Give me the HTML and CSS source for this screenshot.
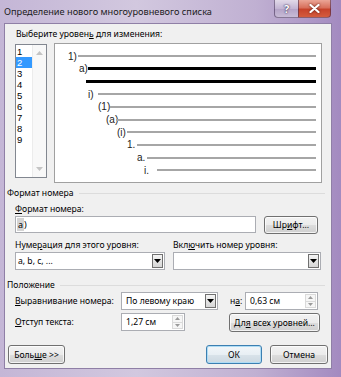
FILE: index.html
```html
<!DOCTYPE html>
<html lang="ru">
<head>
<meta charset="utf-8">
<title>Определение нового многоуровневого списка</title>
<link rel="stylesheet" href="styles.css">
</head>
<body>
<div class="window">
  <div class="titlebar">
    <div class="title">Определение нового многоуровневого списка</div>
    <div class="caption-btns">
      <div class="cap-btn help">?</div>
      <div class="cap-btn close">
        <svg width="11" height="9" viewBox="0 0 11 9"><path d="M1.5 1 L9.5 8 M9.5 1 L1.5 8" stroke="#fff" stroke-width="2.2" stroke-linecap="round" fill="none"/></svg>
      </div>
    </div>
  </div>
  <div class="frame">
    <div class="client">
      <div class="sec-levels">
        <div class="lbl first">Выберите уровен<u>ь</u> для изменения:</div>
        <div class="level-row">
          <div class="listbox">
            <div class="items">
              <div class="item">1</div>
              <div class="item sel">2</div>
              <div class="item">3</div>
              <div class="item">4</div>
              <div class="item">5</div>
              <div class="item">6</div>
              <div class="item">7</div>
              <div class="item">8</div>
              <div class="item">9</div>
            </div>
            <div class="vscroll">
              <svg width="7" height="4" viewBox="0 0 7 4"><path d="M0 4 L3.5 0 L7 4 Z" fill="#c4c4c4"/></svg>
              <svg width="7" height="4" viewBox="0 0 7 4"><path d="M0 0 L3.5 4 L7 0 Z" fill="#c4c4c4"/></svg>
            </div>
          </div>
          <div class="preview">
            <div class="prow lv1"><span class="num">1)</span><span class="line"></span></div>
            <div class="prow lv2 dark"><span class="num">a)</span><span class="line"></span></div>
            <div class="prow lv3 dark"><span class="num"></span><span class="line"></span></div>
            <div class="prow lv4"><span class="num">i)</span><span class="line"></span></div>
            <div class="prow lv5"><span class="num">(1)</span><span class="line"></span></div>
            <div class="prow lv6"><span class="num">(a)</span><span class="line"></span></div>
            <div class="prow lv7"><span class="num">(i)</span><span class="line"></span></div>
            <div class="prow lv8"><span class="num">1.</span><span class="line"></span></div>
            <div class="prow lv9"><span class="num">a.</span><span class="line"></span></div>
            <div class="prow lv10"><span class="num">i.</span><span class="line"></span></div>
          </div>
        </div>
      </div>

      <div class="group g1">Формат номера</div>
      <div class="lbl field"><u>Ф</u>ормат номера:</div>
      <div class="row-input">
        <div class="textbox"><span class="shade">a</span>)</div>
        <div class="btn font-btn">Шр<u>и</u>фт...</div>
      </div>
      <div class="cols">
        <div class="col c1">
          <div class="lbl">Нуме<u>р</u>ация для этого уровня:</div>
          <div class="combo">
            <div class="val">a, b, c, ...</div>
            <div class="dd"><svg width="7" height="4" viewBox="0 0 7 4"><path d="M0 0 L3.5 4 L7 0 Z" fill="#000"/></svg></div>
          </div>
        </div>
        <div class="col c2">
          <div class="lbl">Вкл<u>ю</u>чить номер уровня:</div>
          <div class="combo">
            <div class="val"></div>
            <div class="dd"><svg width="7" height="4" viewBox="0 0 7 4"><path d="M0 0 L3.5 4 L7 0 Z" fill="#000"/></svg></div>
          </div>
        </div>
      </div>

      <div class="group g2">Положение</div>
      <div class="prow-pos r1">
        <div class="plbl"><u>В</u>ыравнивание номера:</div>
        <div class="combo align">
          <div class="val">По левому краю</div>
          <div class="dd"><svg width="7" height="4" viewBox="0 0 7 4"><path d="M0 0 L3.5 4 L7 0 Z" fill="#000"/></svg></div>
        </div>
        <div class="na">н<u>а</u>:</div>
        <div class="spin s63">
          <div class="val">0,63 см</div>
          <div class="arrows">
            <div class="arr"><svg width="5" height="3" viewBox="0 0 5 3"><path d="M0 3 L2.5 0 L5 3 Z" fill="#9a9a9a"/></svg></div>
            <div class="arr"><svg width="5" height="3" viewBox="0 0 5 3"><path d="M0 0 L2.5 3 L5 0 Z" fill="#9a9a9a"/></svg></div>
          </div>
        </div>
      </div>
      <div class="prow-pos r2">
        <div class="plbl"><u>О</u>тступ текста:</div>
        <div class="spin s127">
          <div class="val">1,27 см</div>
          <div class="arrows">
            <div class="arr"><svg width="5" height="3" viewBox="0 0 5 3"><path d="M0 3 L2.5 0 L5 3 Z" fill="#9a9a9a"/></svg></div>
            <div class="arr"><svg width="5" height="3" viewBox="0 0 5 3"><path d="M0 0 L2.5 3 L5 0 Z" fill="#9a9a9a"/></svg></div>
          </div>
        </div>
        <div class="btn all-btn">Дл<u>я</u>&nbsp;всех уровней...</div>
      </div>

      <div class="buttons">
        <div class="btn more">Боль<u>ш</u>е &gt;&gt;</div>
        <div class="btn ok">ОК</div>
        <div class="btn cancel">Отмена</div>
      </div>
    </div>
  </div>
</div>
</body>
</html>
```
FILE: styles.css
```css
* { box-sizing: border-box; }
html, body { margin: 0; padding: 0; }
body {
  font-family: "Noto Sans", "Open Sans", sans-serif;
  font-size: 8.6px;
  color: #000;
  background: #fff;
}
u { text-decoration: underline; text-underline-offset: 1px; }

.window {
  width: 341px;
  height: 377px;
  display: flex;
  flex-direction: column;
  background: linear-gradient(90deg, #c4b6d6 0%, #d2c8df 40%, #c0b0d2 75%, #a38ac0 100%);
  overflow: hidden;
}

.titlebar {
  height: 23px;
  display: flex;
  align-items: flex-start;
}
.title {
  padding-left: 4px;
  line-height: 24px;
  font-size: 9.2px;
  color: #1c1c1c;
  white-space: nowrap;
}
.caption-btns {
  margin-left: auto;
  margin-right: 10px;
  display: flex;
  height: 18px;
}
.cap-btn {
  height: 18px;
  display: flex;
  align-items: center;
  justify-content: center;
  border: 1px solid rgba(60, 40, 80, 0.55);
  border-top: none;
}
.cap-btn.help {
  width: 24px;
  border-radius: 0 0 0 4px;
  background: linear-gradient(#e2dae9, #c3b5d3 50%, #b3a2c6 51%, #c8bbd6);
  color: #fff;
  font-weight: bold;
  font-size: 11px;
  text-shadow: 0 0 2px #3a2a50, 0 0 1px #3a2a50;
  border-right: none;
}
.cap-btn.close {
  width: 33px;
  border-radius: 0 0 4px 0;
  background: linear-gradient(#eba596, #d8705c 45%, #c7432b 55%, #d45c3e);
}
.cap-btn.close svg { filter: drop-shadow(0 0 1px #5a1a10); }

.frame {
  flex: 1;
  display: flex;
  padding: 0 9px 8px 4px;
}
.client {
  flex: 1;
  background: #f0f0f0;
  border: 1px solid #8f7fa6;
  display: flex;
  flex-direction: column;
}

.lbl { line-height: 14px; white-space: nowrap; }

.sec-levels { padding: 3px 0 0 10px; }
.sec-levels .lbl.first { padding-left: 1px; }
.level-row { display: flex; margin-top: 2px; align-items: flex-start; }

.listbox {
  width: 32px;
  height: 134px;
  margin-top: 1px;
  border: 1px solid #828790;
  background: #fff;
  display: flex;
}
.items { width: 16px; padding-top: 1px; }
.item {
  height: 11px;
  line-height: 11px;
  font-family: "Liberation Sans", Arial, sans-serif;
  font-size: 9.5px;
  padding-left: 1px;
}
.item.sel { background: #3399ff; color: #fff; }
.vscroll {
  flex: 1;
  background: #f8f8f8;
  border-left: 1px solid #ececec;
  display: flex;
  flex-direction: column;
  justify-content: space-between;
  align-items: center;
  padding: 6px 0 6px;
}

.preview {
  margin-left: 7px;
  width: 268px;
  height: 140px;
  border: 1px solid #a0a0a0;
  background: #fff;
  padding: 6px 5px 0 0;
  display: grid;
  grid-auto-rows: 12.667px;
}
.prow {
  display: flex;
  align-items: center;
  font-family: "Liberation Sans", Arial, sans-serif;
  font-size: 10px;
  color: #222;
}
.prow .num { margin-left: var(--ml); width: var(--w); flex: none; line-height: 11px; }
.prow .line { flex: 1; height: 2px; background: #a6a6a6; }
.prow.dark .line { height: 3px; background: #000; }
.lv1 { --ml: 13px; --w: 10px; }
.lv2 { --ml: 24px; --w: 9px; }
.lv3 { --ml: 31px; --w: 0px; }
.lv4 { --ml: 33px; --w: 10px; }
.lv5 { --ml: 43px; --w: 12px; }
.lv6 { --ml: 51px; --w: 10px; }
.lv7 { --ml: 62px; --w: 10px; }
.lv8 { --ml: 72px; --w: 10px; }
.lv9 { --ml: 82px; --w: 10px; }
.lv10 { --ml: 89px; --w: 13px; }

.group {
  display: flex;
  align-items: center;
  line-height: 14px;
  padding-left: 2px;
  white-space: nowrap;
}
.group::after {
  content: "";
  flex: 1;
  height: 1px;
  background: #dcdcdc;
  margin: 0 6px 0 5px;
}
.g1 { margin-top: 3px; }
.g2 { margin-top: 8px; }

.lbl.field { padding-left: 10px; margin-top: 2px; }
.row-input { display: flex; padding-left: 10px; align-items: flex-start; }
.textbox {
  width: 241px;
  height: 17px;
  border: 1px solid #abadb3;
  background: #fff;
  line-height: 15px;
  padding-left: 1px;
  font-size: 9px;
}
.shade { background: #d4d4d4; padding: 0 1px; }

.btn {
  border: 1px solid #707070;
  border-radius: 3px;
  background: linear-gradient(#f2f2f2 0%, #ebebeb 50%, #dddddd 51%, #cfcfcf 100%);
  box-shadow: inset 0 0 0 1px rgba(255, 255, 255, 0.75);
  display: flex;
  align-items: center;
  justify-content: center;
  white-space: nowrap;
}
.font-btn { margin-left: 8px; width: 54px; height: 18px; }

.cols { display: flex; padding-left: 10px; gap: 8px; margin-top: 4px; }
.c1 { width: 150px; }
.c2 { width: 148px; }

.combo {
  display: flex;
  height: 18px;
  border: 1px solid #abadb3;
  background: #fff;
}
.combo .val { flex: 1; padding-left: 2px; line-height: 16px; white-space: nowrap; }
.combo .dd {
  width: 11px;
  margin: 1px;
  border: 1px solid #707070;
  background: linear-gradient(#f4f4f4, #d6d6d6);
  display: flex;
  align-items: center;
  justify-content: center;
}

.prow-pos { display: flex; align-items: flex-start; padding-left: 10px; }
.r2 { margin-top: 3px; }
.plbl { width: 106px; line-height: 18px; white-space: nowrap; }
.combo.align { width: 97px; }
.combo.align .val { padding-left: 4px; }
.na { margin-left: 12px; width: 15px; line-height: 18px; }

.spin {
  display: flex;
  height: 18px;
  border: 1px solid #abadb3;
  background: #fff;
}
.spin .val { flex: 1; padding-left: 4px; line-height: 16px; white-space: nowrap; }
.spin .arrows {
  width: 12px;
  display: flex;
  flex-direction: column;
  padding: 1px 1px 1px 0;
}
.spin .arr {
  flex: 1;
  display: flex;
  align-items: center;
  justify-content: center;
  border: 1px solid #dadada;
  background: #f6f6f6;
}
.spin .arr + .arr { border-top: none; }
.s63 { width: 73px; }
.s127 { width: 64px; }
.all-btn { margin-left: 44px; width: 91px; height: 19px; }

.buttons {
  display: flex;
  margin-top: 13px;
  padding: 0 3px;
}
.buttons .btn { height: 19px; }
.more { width: 57px; }
.ok {
  margin-left: auto;
  width: 56px;
  border-color: #3c7fb1;
  box-shadow: inset 0 0 0 1px #aedcf5;
  background: linear-gradient(#f2f6f9 0%, #e8eff4 50%, #d9e3ea 51%, #ccd8e1 100%);
}
.cancel { margin-left: 8px; width: 58px; }
```
